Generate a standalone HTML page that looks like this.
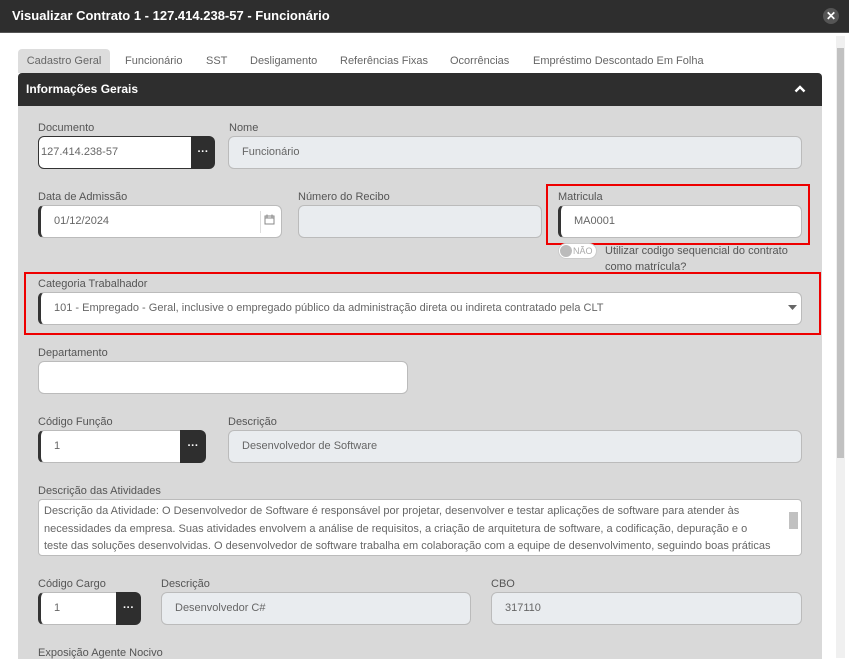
<!DOCTYPE html>
<html><head><meta charset="utf-8"><style>
*{box-sizing:border-box;margin:0;padding:0}
body{width:849px;height:668px;overflow:hidden;background:#fff;font-family:"Liberation Sans",sans-serif;position:relative;color:#555}
.a{position:absolute}
.title{left:0;top:0;width:849px;height:33px;background:#2e2e2e;border-bottom:1px solid #555;color:#fff;font-weight:bold;font-size:13px;line-height:31px;padding-left:12px}
.close{left:823px;top:8px;width:16px;height:16px;border-radius:50%;background:#555;color:#fff;font-size:12px;font-weight:bold;text-align:center;line-height:16px}
.tab{top:49px;height:24px;font-size:11px;line-height:24px;color:#666}
.hdr{left:18px;top:73px;width:804px;height:33px;background:#2e2e2e;color:#fff;font-weight:bold;font-size:12px;line-height:32px;padding-left:8px;border-radius:4px 4px 0 0}
.body{left:18px;top:106px;width:804px;height:553px;background:#d9d9d9}
.lbl{font-size:11px;color:#555}
.in{height:33px;border:1px solid #bbb;border-radius:6px;background:#e9ecef;font-size:11px;color:#666;line-height:31px;padding-left:13px}
.w{background:#fff;border-left:3px solid #333}
.btn{height:33px;background:#2e2e2e;color:#fff;font-size:11px;text-align:center;line-height:33px;font-weight:bold;border-radius:0 6px 6px 0}
.red{border:2px solid #e00}
.sb{left:836px;top:36px;width:9px;height:622px;background:#f0f0f0}
</style></head><body>
<div class="a title">Visualizar Contrato 1 - 127.414.238-57 - Funcionário</div>
<div class="a close">✕</div>
<div class="a tab" style="left:18px;width:92px;background:#ddd;border-radius:4px 4px 0 0;text-align:center">Cadastro Geral</div>
<div class="a tab" style="left:125px">Funcionário</div>
<div class="a tab" style="left:206px">SST</div>
<div class="a tab" style="left:250px">Desligamento</div>
<div class="a tab" style="left:340px">Referências Fixas</div>
<div class="a tab" style="left:450px">Ocorrências</div>
<div class="a tab" style="left:533px">Empréstimo Descontado Em Folha</div>
<div class="a hdr">Informações Gerais</div>
<svg class="a" style="left:794px;top:84px" width="12" height="10"><path d="M1.5 7.5L6 3l4.5 4.5" stroke="#fff" stroke-width="2.4" fill="none"/></svg>
<div class="a body"></div>
<div class="a sb"></div>
<div class="a" style="left:837px;top:48px;width:7px;height:410px;background:#c1c1c1"></div>

<div class="a lbl" style="left:38px;top:122px">Documento</div>
<div class="a in" style="left:38px;top:136px;width:154px;background:#fff;border:1px solid #333;border-radius:6px 0 0 6px;padding-left:2px">127.414.238-57</div>
<div class="a btn" style="left:191px;top:136px;width:24px">···</div>
<div class="a lbl" style="left:229px;top:122px">Nome</div>
<div class="a in" style="left:228px;top:136px;width:574px">Funcionário</div>

<div class="a lbl" style="left:38px;top:191px">Data de Admissão</div>
<div class="a in w" style="left:38px;top:205px;width:244px">01/12/2024</div>
<div class="a" style="left:260px;top:211px;width:1px;height:22px;background:#ddd"></div>
<svg class="a" style="left:264px;top:214px" width="11" height="11"><rect x="1" y="2" width="9" height="8" fill="none" stroke="#888"/><path d="M1 4h9M3 0.5v3M8 0.5v3" stroke="#888"/></svg>
<div class="a lbl" style="left:298px;top:191px">Número do Recibo</div>
<div class="a in" style="left:298px;top:205px;width:244px"></div>
<div class="a red" style="left:546px;top:184px;width:264px;height:61px"></div>
<div class="a lbl" style="left:558px;top:191px">Matricula</div>
<div class="a in w" style="left:558px;top:205px;width:244px">MA0001</div>
<div class="a" style="left:558px;top:243px;width:39px;height:16px;border:1px solid #ccc;border-radius:8px;background:#fff;font-size:9px;color:#aaa;line-height:14px;padding-left:14px">NÃO<div class="a" style="left:1px;top:1px;width:12px;height:12px;border-radius:50%;background:#bbb"></div></div>
<div class="a lbl" style="left:605px;top:243px;line-height:16px">Utilizar codigo sequencial do contrato<br>como matrícula?</div>

<div class="a red" style="left:24px;top:272px;width:797px;height:63px"></div>
<div class="a lbl" style="left:38px;top:278px">Categoria Trabalhador</div>
<div class="a in w" style="left:38px;top:292px;width:764px">101 - Empregado - Geral, inclusive o empregado público da administração direta ou indireta contratado pela CLT</div>
<svg class="a" style="left:788px;top:305px" width="9" height="6"><path d="M0 0h9L4.5 5z" fill="#666"/></svg>

<div class="a lbl" style="left:38px;top:347px">Departamento</div>
<div class="a in" style="left:38px;top:361px;width:370px;background:#fff"></div>

<div class="a lbl" style="left:38px;top:416px">Código Função</div>
<div class="a in w" style="left:38px;top:430px;width:143px;border-radius:6px 0 0 6px">1</div>
<div class="a btn" style="left:180px;top:430px;width:26px">···</div>
<div class="a lbl" style="left:228px;top:416px">Descrição</div>
<div class="a in" style="left:228px;top:430px;width:574px">Desenvolvedor de Software</div>

<div class="a lbl" style="left:38px;top:485px">Descrição das Atividades</div>
<div class="a" style="left:38px;top:499px;width:764px;height:57px;background:#fff;border:1px solid #bbb;border-radius:4px;font-size:11px;line-height:17.5px;color:#666;padding:3px 30px 0 5px;overflow:hidden">Descrição da Atividade: O Desenvolvedor de Software é responsável por projetar, desenvolver e testar aplicações de software para atender às necessidades da empresa. Suas atividades envolvem a análise de requisitos, a criação de arquitetura de software, a codificação, depuração e o teste das soluções desenvolvidas. O desenvolvedor de software trabalha em colaboração com a equipe de desenvolvimento, seguindo boas práticas de</div>
<div class="a" style="left:789px;top:512px;width:9px;height:17px;background:#c1c1c1"></div>

<div class="a lbl" style="left:38px;top:578px">Código Cargo</div>
<div class="a in w" style="left:38px;top:592px;width:79px;border-radius:6px 0 0 6px">1</div>
<div class="a btn" style="left:116px;top:592px;width:25px">···</div>
<div class="a lbl" style="left:161px;top:578px">Descrição</div>
<div class="a in" style="left:161px;top:592px;width:310px">Desenvolvedor C#</div>
<div class="a lbl" style="left:491px;top:578px">CBO</div>
<div class="a in" style="left:491px;top:592px;width:311px">317110</div>
<div class="a lbl" style="left:38px;top:647px">Exposição Agente Nocivo</div>
</body></html>
